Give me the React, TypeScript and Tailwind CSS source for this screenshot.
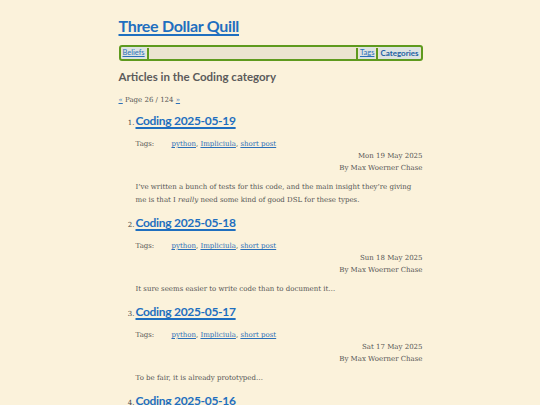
import React from 'react';

const posts = [
  {
    n: 1,
    title: 'Coding 2025-05-19',
    date: 'Mon 19 May 2025',
    body: (
      <>
        I&#8217;ve written a bunch of tests for this code, and the main insight they&#8217;re giving me is that I{' '}
        <em>really</em> need some kind of good DSL for these types.
      </>
    ),
  },
  { n: 2, title: 'Coding 2025-05-18', date: 'Sun 18 May 2025', body: <>It sure seems easier to write code than to document it…</> },
  { n: 3, title: 'Coding 2025-05-17', date: 'Sat 17 May 2025', body: <>To be fair, it is already prototyped…</> },
  { n: 4, title: 'Coding 2025-05-16', date: 'Fri 16 May 2025', body: <>More code.</> },
];

const sans = "font-['Lato','Liberation_Sans',sans-serif]";
const serif = "font-['DejaVu_Serif','Liberation_Serif',serif]";

function Post({ p }: { p: (typeof posts)[number] }) {
  return (
    <li className="flex">
      <span className={`${serif} w-[17px] shrink-0 text-right pr-[1px] text-[7px] text-[#444] pt-[6px]`}>{p.n}.</span>
      <div className="flex-1">
        <a href="#" className={`${sans} block text-[12px] font-bold leading-[18px] tracking-[-0.3px] text-[#1f6fbf] underline decoration-[1.5px] underline-offset-2`}>
          {p.title}
        </a>
        <div className={`${serif} mt-[8px] flex text-[7px] leading-[12px] text-[#555]`}>
          <span className="w-[36px]">Tags:</span>
          <span>
            <a href="#" className="text-[#2c70b8] underline">python</a>,{' '}
            <a href="#" className="text-[#2c70b8] underline">Impliciula</a>,{' '}
            <a href="#" className="text-[#2c70b8] underline">short post</a>
          </span>
        </div>
        <div className={`${serif} text-right text-[7px] leading-[12px] text-[#555]`}>
          <div>{p.date}</div>
          <div>By Max Woerner Chase</div>
        </div>
        <p className={`${serif} mt-[7px] pr-[6px] text-[7px] leading-[13px] text-[#555]`}>{p.body}</p>
      </div>
    </li>
  );
}

export default function App() {
  return (
    <div className="h-[405px] w-[540px] overflow-hidden bg-[#fbf2db]">
      <div className="mx-auto w-[305px] pt-[15px] pl-[1px]">
        <a href="#" className={`${sans} block text-[16px] font-bold leading-[22px] tracking-[-0.3px] text-[#1f6fbf] underline decoration-[1.5px] underline-offset-2`}>
          Three Dollar Quill
        </a>
        <nav className={`${sans} mt-[8px] flex h-[16px] items-center rounded-[3px] border-2 border-[#5e9a1e] bg-[#ebe4d0] px-[1px] text-[7.5px]`}>
          <a href="#" className="bg-[#dde3e2] px-[1px] text-[#2c70b8] underline">Beliefs</a>
          <span className="mx-[1px] h-[11px] w-[2px] bg-[#5e9a1e]" />
          <span className="flex-1" />
          <span className="mx-[1px] h-[11px] w-[2px] bg-[#5e9a1e]" />
          <a href="#" className="bg-[#dde3e2] px-[1px] text-[#2c70b8] underline">Tags</a>
          <span className="mx-[1px] h-[11px] w-[2px] bg-[#5e9a1e]" />
          <span className="bg-[#dde3e2] px-[1px] text-[8px] font-bold text-[#1d5fa3]">Categories</span>
        </nav>
        <h1 className={`${sans} mt-[7px] text-[11.5px] font-bold leading-[18px] text-[#5b5b5b]`}>
          Articles in the Coding category
        </h1>
        <div className={`${serif} mt-[9px] text-[7px] leading-[10px] text-[#555]`}>
          <a href="#" className="text-[#2c70b8] underline">«</a> Page 26 / 124{' '}
          <a href="#" className="text-[#2c70b8] underline">»</a>
        </div>
        <ol className="mt-[7px] flex flex-col gap-[7px]">
          {posts.map((p) => (
            <Post key={p.n} p={p} />
          ))}
        </ol>
      </div>
    </div>
  );
}
